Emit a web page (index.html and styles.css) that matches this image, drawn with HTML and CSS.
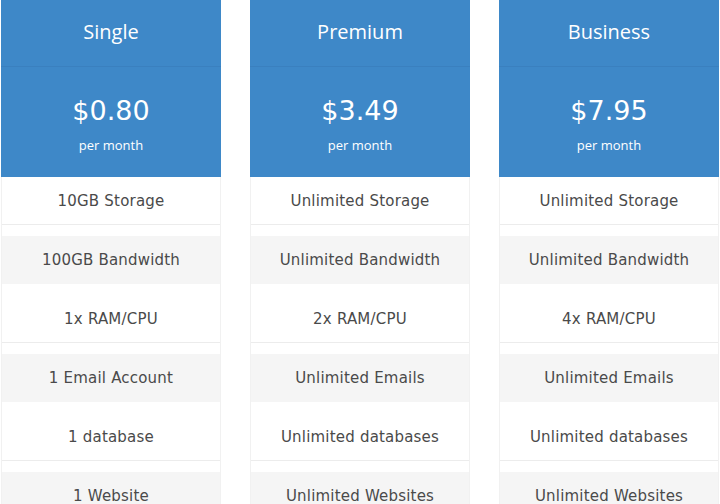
FILE: index.html
```html
<!DOCTYPE html>
<html>
<head>
<meta charset="utf-8">
<link rel="stylesheet" href="styles.css">
</head>
<body>
<div class="plans">
  <div class="plan">
    <div class="plan-head">
      <div class="plan-title">Single</div>
      <div class="plan-price">
        <div class="amount">$0.80</div>
        <div class="period">per month</div>
      </div>
    </div>
    <ul class="features">
      <li>10GB Storage</li>
      <li class="alt">100GB Bandwidth</li>
      <li>1x RAM/CPU</li>
      <li class="alt">1 Email Account</li>
      <li>1 database</li>
      <li class="alt">1 Website</li>
    </ul>
  </div>
  <div class="plan">
    <div class="plan-head">
      <div class="plan-title">Premium</div>
      <div class="plan-price">
        <div class="amount">$3.49</div>
        <div class="period">per month</div>
      </div>
    </div>
    <ul class="features">
      <li>Unlimited Storage</li>
      <li class="alt">Unlimited Bandwidth</li>
      <li>2x RAM/CPU</li>
      <li class="alt">Unlimited Emails</li>
      <li>Unlimited databases</li>
      <li class="alt">Unlimited Websites</li>
    </ul>
  </div>
  <div class="plan">
    <div class="plan-head">
      <div class="plan-title">Business</div>
      <div class="plan-price">
        <div class="amount">$7.95</div>
        <div class="period">per month</div>
      </div>
    </div>
    <ul class="features">
      <li>Unlimited Storage</li>
      <li class="alt">Unlimited Bandwidth</li>
      <li>4x RAM/CPU</li>
      <li class="alt">Unlimited Emails</li>
      <li>Unlimited databases</li>
      <li class="alt">Unlimited Websites</li>
    </ul>
  </div>
</div>
</body>
</html>
```

FILE: styles.css
```css
* { box-sizing: border-box; }
html, body { margin: 0; padding: 0; background: #ffffff; }
body { overflow: hidden; height: 504px; }

.plans {
  display: grid;
  grid-template-columns: repeat(3, 1fr);
  column-gap: 29px;
  padding: 0 1px;
  height: 504px;
  overflow: hidden;
}

.plan { display: flex; flex-direction: column; }

.plan-head {
  background: #3e88c8;
  color: #ffffff;
  text-align: center;
}

.plan-title {
  height: 67px;
  border-bottom: 1px solid #3a80bf;
  display: flex;
  align-items: center;
  justify-content: center;
  font-family: "Open Sans", sans-serif;
  font-size: 20px;
  padding-bottom: 4px;
}

.plan-price {
  height: 110px;
  padding-top: 28px;
}

.amount {
  font-family: "DejaVu Sans", Verdana, sans-serif;
  font-size: 27px;
  line-height: 32px;
}

.period {
  font-family: "Open Sans", sans-serif;
  font-size: 13px;
  line-height: 18px;
  margin-top: 9px;
}

.features {
  list-style: none;
  margin: 0;
  padding: 0;
  border-left: 1px solid #f1f1f1;
  border-right: 1px solid #f1f1f1;
  flex: 1;
}

.features li {
  height: 48px;
  margin-bottom: 11px;
  border-bottom: 1px solid #ececec;
  display: flex;
  align-items: center;
  justify-content: center;
  font-family: "DejaVu Sans", Verdana, sans-serif;
  font-size: 15px;
  letter-spacing: 0.2px;
  color: #4a4a4a;
}

.features li.alt {
  background: #f5f5f5;
  border-bottom-color: #f5f5f5;
}
```
